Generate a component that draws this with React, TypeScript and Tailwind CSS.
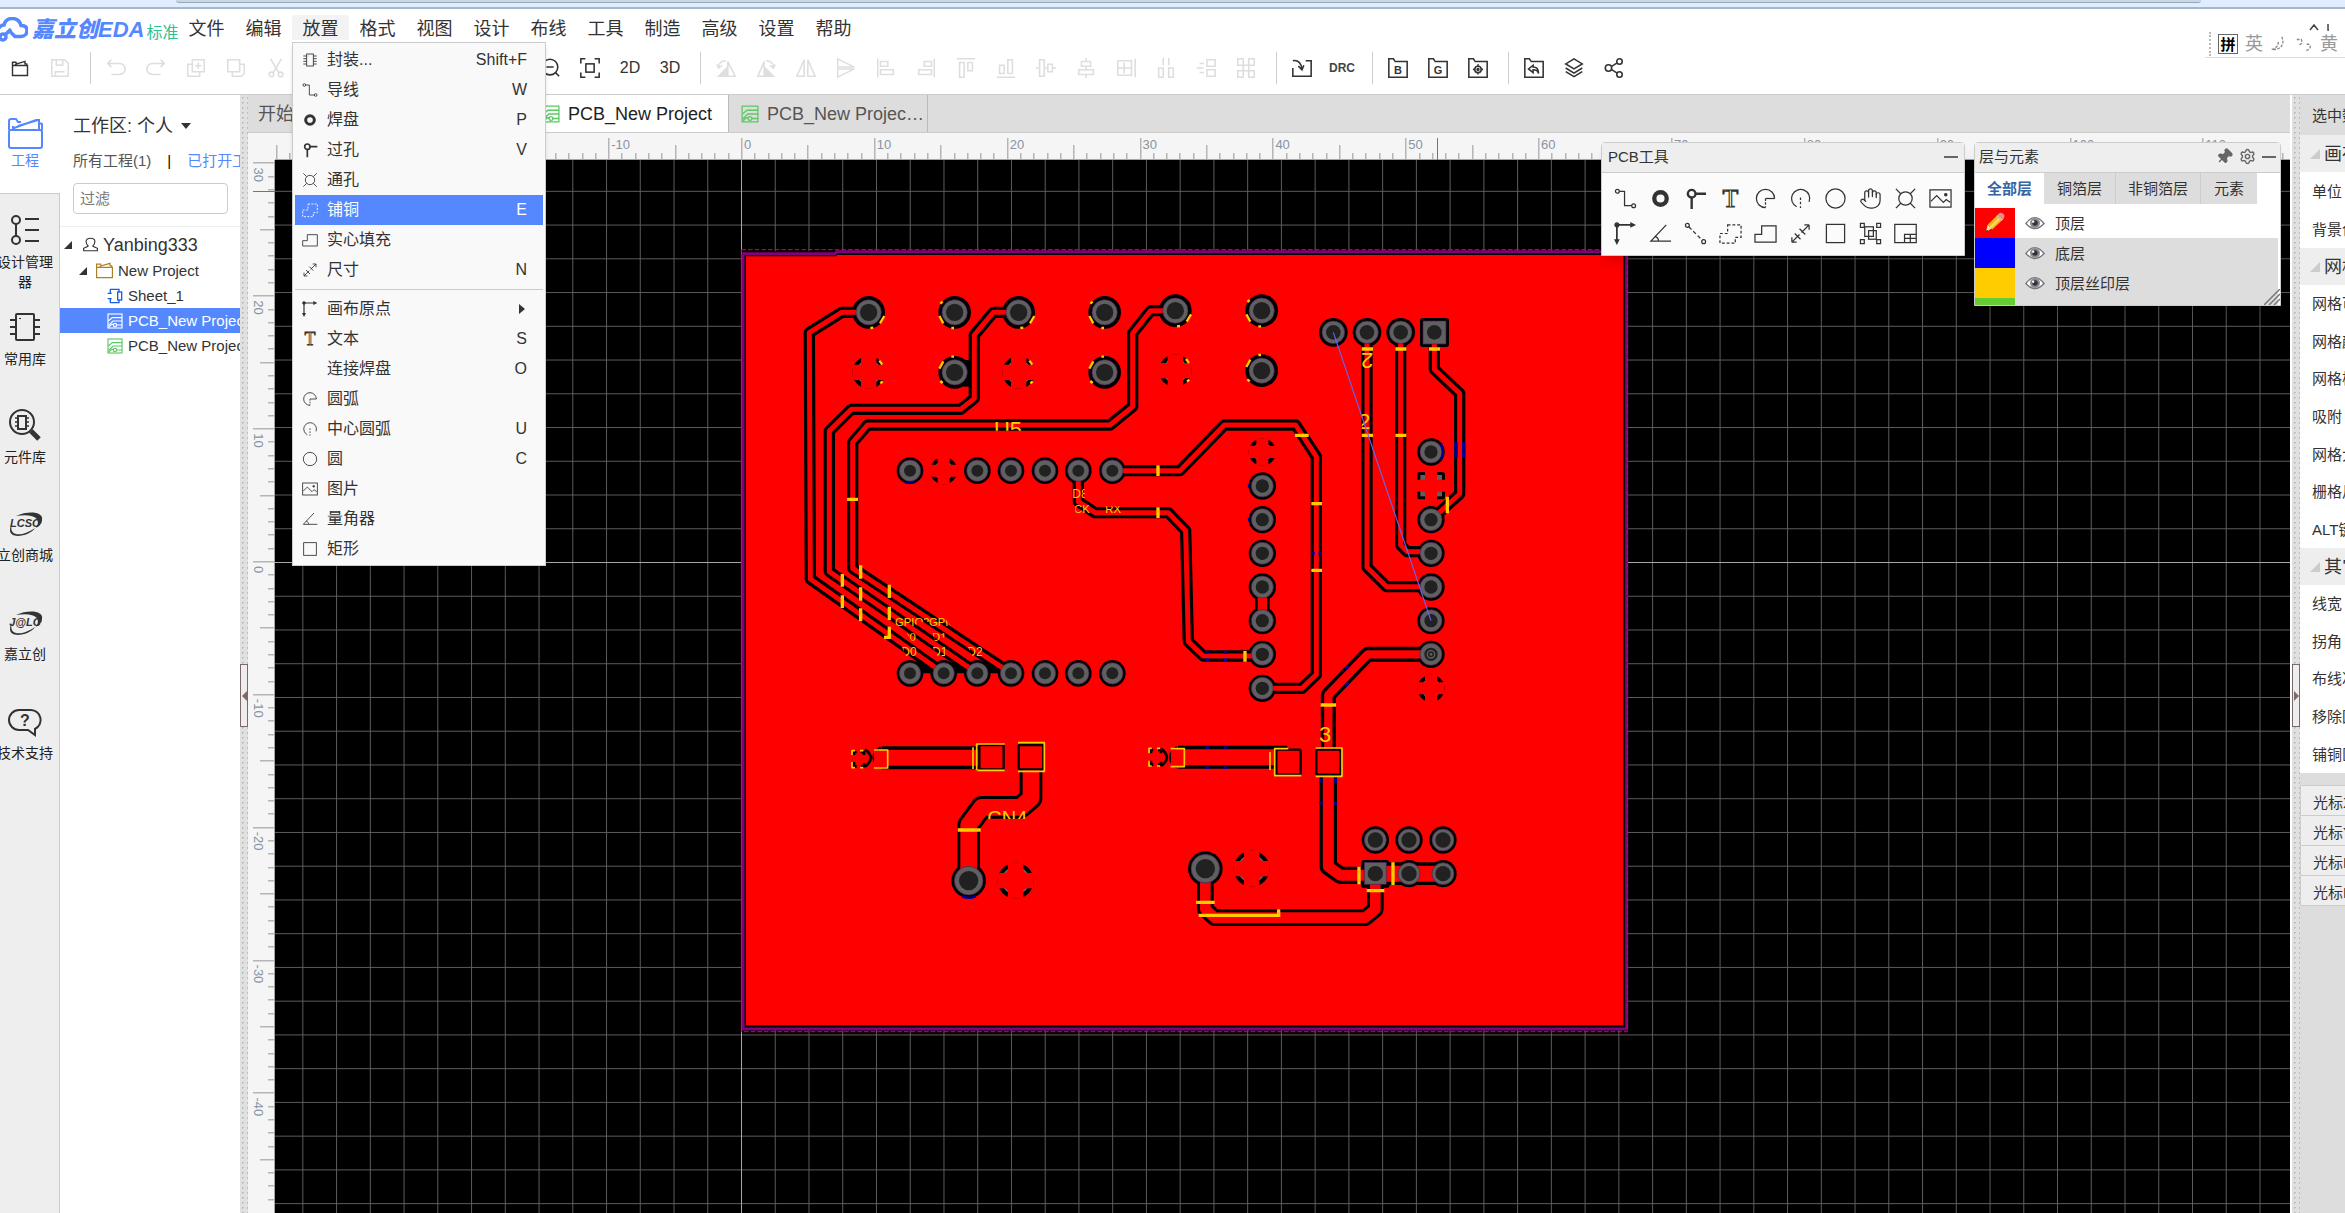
import { useState } from 'react';
import type { ReactNode } from 'react';
import { Hand, Settings, Pin } from 'lucide-react';

const ICONS: Record<string, ReactNode> = {
  footprint: (
    <>
      <rect x="7" y="3" width="10" height="18" />
      <path d="M2 6h5M2 10h5M2 14h5M2 18h5M17 6h5M17 10h5M17 14h5M17 18h5" />
      <path d="M10 6h.5" />
    </>
  ),
  track: (
    <>
      <circle cx="3.500" cy="4.500" r="2" />
      <circle cx="20.500" cy="19.500" r="2" />
      <path d="M5.500 4.500H11v15h7.500" />
    </>
  ),
  pad: <circle cx="12" cy="12" r="6.500" strokeWidth="4.500" />,
  via: (
    <>
      <circle cx="8" cy="7" r="4" strokeWidth="2.500" />
      <path d="M12 7h11M8 11v12" strokeWidth="2.500" />
    </>
  ),
  hole: (
    <>
      <circle cx="12" cy="12" r="7" />
      <path d="M2 2l5 5M22 2l-5 5M2 22l5-5M22 22l-5-5" />
    </>
  ),
  copper: <path d="M9 3h14v13h-6v6H1V12h8z" strokeDasharray="3 2" />,
  solid: <path d="M1 13h7V4h15v17H1z" />,
  dimension: (
    <>
      <path d="M13 11l8-8M21 3h-5M21 3v5M11 13l-8 8M3 21h5M3 21v-5" />
      <path d="M11 7l6 6M6 12l6 6" />
    </>
  ),
  origin: (
    <>
      <path d="M3 3h15M3 3v16" strokeWidth="1.800" />
      <path d="M17 0l6 3-6 3zM0 18l3 6 3-6z" fill="currentColor" stroke="none" />
      <circle cx="3" cy="3" r="2" fill="currentColor" />
    </>
  ),
  text: (
    <text x="12" y="21" textAnchor="middle" fontSize="27" fontFamily="Liberation Serif, serif" strokeWidth="1.200">
      T
    </text>
  ),
  arc: (
    <>
      <path d="M21.500 12A9.500 9.500 0 1 0 12 21.500" />
      <path d="M21.500 12H12" />
      <path d="M12 12v9.500" strokeDasharray="2.500 1.500" />
    </>
  ),
  centerArc: (
    <>
      <path d="M21 15.500A9.500 9.500 0 1 0 8 20.600" />
      <path d="M12 11v11" strokeDasharray="2.500 2" />
    </>
  ),
  circle: <circle cx="12" cy="12" r="10" />,
  image: (
    <>
      <rect x="1" y="3" width="22" height="18" />
      <path d="M2 15l6-6 7 7 3-3 4 3" />
      <circle cx="17.500" cy="8" r="1.200" fill="currentColor" />
    </>
  ),
  protractor: <path d="M18 3L2 20h21M6 15c3 1 4 3 4 5" />,
  rect: <rect x="2.500" y="2.500" width="19" height="19" />,
  link: (
    <>
      <circle cx="3.500" cy="3.500" r="2" />
      <circle cx="20.500" cy="20.500" r="2" />
      <path d="M5 5l14 14" strokeDasharray="4 2.500" />
    </>
  ),
  group: (
    <>
      <rect x="6" y="5" width="9" height="10" />
      <rect x="10" y="9" width="8" height="9" />
      <path d="M1.500 1.500h4v4h-4zM18.500 1.500h4v4h-4zM1.500 18.500h4v4h-4zM18.500 18.500h4v4h-4z" />
    </>
  ),
  table: (
    <>
      <rect x="0.800" y="2.500" width="22.400" height="19" />
      <path d="M11 21v-8h12M11 17h12M17 13v8" />
    </>
  ),
  open: <path d="M3 9v12h18V9zM3 9V5h4l1 2 10-3v3h2v2M6 9l1-2" />,
  save: <path d="M3 3h14l4 4v14H3zM8 3v6h7V3M7 21v-5h10" />,
  undo: <path d="M7 3L3 7l4 4M3 7h13a5 5 0 0 1 0 12H7" />,
  redo: <path d="M17 3l4 4-4 4M21 7H8a5 5 0 0 0 0 12h9" />,
  duplicate: <path d="M8 3h13v13H8zM8 8H3v13h13v-5M14.500 6v7M11 9.500h7" />,
  copy: <path d="M3 3h13v13H3zM16 8h5v10l-3 3H8v-5" />,
  cut: (
    <>
      <path d="M6 2l9 15M18 2L9 17" />
      <circle cx="7" cy="19" r="2.500" />
      <circle cx="17" cy="19" r="2.500" />
    </>
  ),
  zoomOut: (
    <>
      <circle cx="12" cy="11" r="8.500" />
      <path d="M8 11h8M18 17l4 4" />
    </>
  ),
  fit: (
    <>
      <path d="M2 7V2h5M17 2h5v5M22 17v5h-5M7 22H2v-5" />
      <rect x="7.500" y="7.500" width="9" height="9" />
    </>
  ),
  rotateLeft: (
    <>
      <path d="M14 5v16h8z" />
      <path d="M4 21h9v-9z" fill="currentColor" />
      <path d="M4 11c0-4 3-7 8-7M2 8l2 4 4-3" />
    </>
  ),
  rotateRight: (
    <>
      <path d="M10 5v16H3z" />
      <path d="M20 21h-9v-9z" fill="currentColor" />
      <path d="M20 11c0-4-3-7-8-7M22 8l-2 4-4-3" />
    </>
  ),
  flipH: <path d="M10 3v18H2zM14 3v18h8z" />,
  flipV: <path d="M3 2l18 9H3zM3 22l18-9H3z" />,
  alignLeft: <path d="M3 2v20M6 5h8v5H6zM6 14h14v5H6z" />,
  alignRight: <path d="M21 2v20M10 5h8v5h-8zM4 14h14v5H4z" />,
  alignTop: <path d="M2 2h20M5 6h5v16H5zM14 6h5v9h-5z" />,
  alignBottom: <path d="M2 22h20M5 9h5v9H5zM14 3h5v15h-5z" />,
  alignMiddle: <path d="M1 12h4M10 12h4M19 12h4M5 3h5v18H5zM14 8h5v8h-5z" />,
  alignCenter: <path d="M12 1v4M12 10v4M12 19v4M7 5h10v5H7zM4 14h16v5H4z" />,
  distGrid: <path d="M3 4h15v16H3zM3 12h15M10 6v12M22 2v20" />,
  distH: <path d="M4 12h5v10H4zM15 12h5v10h-5zM9 1v8M15 1v8" />,
  distV: <path d="M13 3h9v7h-9zM13 14h9v7h-9zM5 7h5M2 12h7M5 17h5" />,
  distArray: <path d="M3 2h6v7H3zM15 2h6v7h-6zM3 15h6v7H3zM15 15h6v7h-6zM9 9h6v6H9z" />,
  importIcon: <path d="M2 12v9h20V4h-6M2 4c6-1 9 3 10 9M8 10l4 4 2-5" />,
  share: (
    <>
      <circle cx="6" cy="12" r="3.500" />
      <circle cx="18" cy="5" r="3" />
      <circle cx="18" cy="19" r="3" />
      <path d="M9 10.500L15.500 6.500M9 13.500l6.500 4" />
    </>
  ),
  layers: <path d="M12 2l9 5.500-9 5.500-9-5.500zM3 12l9 5.500L21 12M3 16l9 5.500L21 16" />,
  folderBack: (
    <>
      <path d="M2 22V2h5l2 3h13v17z" />
      <path d="M11 9l-5 4 5 4v-3c4 0 5 1 6 4 0-4-1-7-6-7z" />
    </>
  ),
  folderGear: (
    <>
      <path d="M2 22V2h5l2 3h13v17z" />
      <circle cx="12" cy="13.500" r="3.500" />
      <circle cx="12" cy="13.500" r="1" />
      <path d="M12 8v2M12 17v2M6.500 13.500h2M15.500 13.500h2" />
    </>
  ),
  folderB: (
    <>
      <path d="M2 22V2h5l2 3h13v17z" />
      <text x="12" y="18" textAnchor="middle" fontSize="12" fontWeight="bold" fill="currentColor" stroke="none">B</text>
    </>
  ),
  folderG: (
    <>
      <path d="M2 22V2h5l2 3h13v17z" />
      <text x="12" y="18" textAnchor="middle" fontSize="12" fontWeight="bold" fill="currentColor" stroke="none">G</text>
    </>
  ),
  pcb: (
    <>
      <rect x="1.500" y="1.500" width="21" height="21" />
      <path d="M2 12l6-5h15M2 19l7-7h14M2 22l5-5h3M14 18h9" />
      <circle cx="12" cy="18" r="2.500" />
    </>
  ),
  sheet: (
    <>
      <path d="M5 7V2h13v4M5 17v5h13v-4M1 8h6M1 16h6" />
      <rect x="16" y="6" width="6" height="12" />
    </>
  ),
  folder: <path d="M2 8v13h20V8zM2 8V4h5l1 2 11-3v3h2v2M6 8l1-2" />,
  user: <path d="M8 14c-2-2-3-4-3-7 0-3 2-5 7-5s7 2 7 5c0 3-1 5-3 7v1l7 3v4H1v-4l7-3z" />,
};

type IconProps = { name: string; className?: string; stroke?: number };

const Icon = ({ name, className = 'size-6', stroke = 1.5 }: IconProps) => (
  <svg viewBox="0 0 24 24" className={`shrink-0 ${className}`} fill="none" stroke="currentColor" strokeWidth={stroke} aria-hidden="true">
    {ICONS[name]}
  </svg>
);

const MENUS = ['文件', '编辑', '放置', '格式', '视图', '设计', '布线', '工具', '制造', '高级', '设置', '帮助'];

const PLACE_TOP = [
  ['footprint', '封装...', 'Shift+F'],
  ['track', '导线', 'W'],
  ['pad', '焊盘', 'P'],
  ['via', '过孔', 'V'],
  ['hole', '通孔', ''],
  ['copper', '铺铜', 'E'],
  ['solid', '实心填充', ''],
  ['dimension', '尺寸', 'N'],
];

const PLACE_BOTTOM = [
  ['origin', '画布原点', '>'],
  ['text', '文本', 'S'],
  ['', '连接焊盘', 'O'],
  ['arc', '圆弧', ''],
  ['centerArc', '中心圆弧', 'U'],
  ['circle', '圆', 'C'],
  ['image', '图片', ''],
  ['protractor', '量角器', ''],
  ['rect', '矩形', ''],
];

const MenuRow = ({ item }: { item: string[] }) => {
  const [icon, label, key] = item;
  const active = label === '铺铜';
  return (
    <li>
      <button className={`flex h-[30px] w-full items-center pr-4 pl-[7px] text-base leading-none ${active ? 'bg-[#5588ff] text-white' : 'text-[#333]'}`}>
        <span className="w-[25px]">{icon && <Icon name={icon} className="size-4" stroke={1.3} />}</span>
        <span className="flex-1 text-left">{label}</span>
        {key === '>' ? (
          <svg viewBox="0 0 6 10" className="mr-0.5 h-2.5 w-1.5" fill="currentColor"><path d="M0 0l6 5-6 5z" /></svg>
        ) : (
          <span>{key}</span>
        )}
      </button>
    </li>
  );
};

const PlaceMenu = () => (
  <div className="absolute top-full left-0 z-30 w-[254px] border border-[#ccc] bg-[#f9f9f9] p-0.5 pb-px shadow-md">
    <ul>
      {PLACE_TOP.map((item) => <MenuRow key={item[1]} item={item} />)}
    </ul>
    <hr className="my-1 border-[#ccc]" />
    <ul>
      {PLACE_BOTTOM.map((item) => <MenuRow key={item[1]} item={item} />)}
    </ul>
  </div>
);

const MenuBar = () => (
  <div className="flex h-[33px] shrink-0 items-end bg-white">
    <div className="flex h-[25px] w-[178px] items-center whitespace-nowrap">
      <svg viewBox="0 0 28 25" className="h-[25px] w-7 shrink-0" fill="none" stroke="#5588ff" strokeWidth="3.500">
        <path d="M-1 11C1 8 3 8 4 8 5 4 8 1.500 12 1.500c5 0 8 3 9 7 4 0 6 2 6 5s-2 6-6 6h-6l-5-5" />
        <circle cx="3" cy="20" r="3" />
        <path d="M5 18l6-6" />
      </svg>
      <span className="ml-1 text-[22px] leading-7 font-black text-[#5588ff] italic">嘉立创EDA</span>
      <span className="ml-0.5 pt-1.5 text-base leading-none text-[#2fc090]">标准</span>
    </div>
    <nav className="flex">
      {MENUS.map((m) => (
        <div key={m} className="relative">
          <button className={`h-[25px] w-[57px] rounded-t text-lg leading-[29px] text-[#333] ${m === '放置' ? 'bg-[#f3f3f3]' : ''}`}>{m}</button>
          {m === '放置' && <PlaceMenu />}
        </div>
      ))}
    </nav>
    <div className="relative ml-auto h-full w-[140px]">
      {/* floating input-method bar */}
      <div className="absolute top-[22px] right-0 z-10 flex h-[27px] w-[140px] items-center gap-[7px] border-b border-[#ddd] pl-1 text-lg leading-none text-[#999]">
        <span className="h-6 border-l-2 border-dotted border-[#bbb]" />
        <span className="flex size-5 items-center justify-center border border-[#666] text-[15px] font-bold text-black">拼</span>
        <span>英</span>
        <svg viewBox="0 0 20 20" className="size-[18px]" fill="none" stroke="#888" strokeWidth="1.500" strokeDasharray="3 1.500"><path d="M13 2c4 8-1 15-11 14 5-1 8-5 7-9" /></svg>
        <svg viewBox="0 0 20 20" className="size-[18px]" fill="none" stroke="#888" strokeWidth="1.500" strokeDasharray="3 1.500"><path d="M2 5h5c2 4-1 6-3 6M13 10c6 0 5 7-1 7" /></svg>
        <span>黄</span>
      </div>
      <svg viewBox="0 0 24 8" className="absolute top-3.5 right-3 h-2 w-6" fill="none" stroke="#444" strokeWidth="1.500"><path d="M1 7l4-5 4 5M19 1v6h1" /></svg>
    </div>
  </div>
);

const TOOLBAR: string[][] = [
  ['open', 'save'],
  ['undo', 'redo', 'duplicate', 'copy', 'cut', 'gap', 'zoomOut', 'fit', '2D', '3D'],
  ['rotateLeft', 'rotateRight', 'flipH', 'flipV', 'alignLeft', 'alignRight', 'alignTop', 'alignBottom', 'alignMiddle', 'alignCenter', 'distGrid', 'distH', 'distV', 'distArray'],
  ['importIcon', 'DRC'],
  ['folderB', 'folderG', 'folderGear'],
  ['folderBack', 'layers', 'share'],
];
const ENABLED = ['open', 'zoomOut', 'fit', '2D', '3D', 'importIcon', 'DRC', 'folderB', 'folderG', 'folderGear', 'folderBack', 'layers', 'share'];

const ToolButton = ({ name }: { name: string }) => {
  if (name === 'gap') return <div className="w-[234px]" />;
  const color = ENABLED.includes(name) ? 'text-[#333]' : 'text-[#dedede]';
  return (
    <button aria-label={name} className={`flex h-8 w-10 items-center justify-center ${color}`}>
      {name === '2D' || name === '3D' ? (
        <span className="text-base">{name}</span>
      ) : name === 'DRC' ? (
        <span className="text-xs font-bold text-[#444]">DRC</span>
      ) : (
        <Icon name={name} className={name === 'open' ? 'size-5' : 'size-[22px]'} stroke={1.7} />
      )}
    </button>
  );
};

const Toolbar = () => (
  <div className="flex h-[53px] shrink-0 items-center border-b border-[#ccc] bg-white">
    {TOOLBAR.map((group, i) => (
      <div key={i} className="flex items-center">
        {i > 0 && <span className="mr-[5px] ml-2.5 h-8 w-px bg-[#ccc]" />}
        {group.map((name) => <ToolButton key={name} name={name} />)}
      </div>
    ))}
  </div>
);

const Ellipses = () => (
  <>
    <path d="M9 5C22-1 37 1 35 9c0 4-3 6-6 8C35 8 27 2 9 5z" fill="#333" stroke="none" />
    <path d="M5 13c-4 13 10 13 23 4C23 25 3 29 3 19c0-3 1-4 2-6z" fill="#333" stroke="none" />
  </>
);

const RAIL = [
  {
    label: '设计管理器',
    box: 'pt-5 h-[112px]',
    art: (
      <>
        <circle cx="11" cy="6" r="4" />
        <circle cx="11" cy="26" r="4" />
        <path d="M11 10v12M20 5h14M20 16h14M20 27h14" />
      </>
    ),
  },
  {
    label: '常用库',
    box: 'pt-[5px] h-[98px]',
    art: (
      <>
        <rect x="11" y="3" width="18" height="26" rx="1" />
        <path d="M5 9h6M5 16h6M5 23h6M29 9h6M29 16h6M29 23h6M15 7v1" />
      </>
    ),
  },
  {
    label: '元件库',
    box: 'pt-[5px] h-[98px]',
    art: (
      <>
        <circle cx="17" cy="13" r="12" />
        <rect x="13" y="7" width="8" height="13" />
        <path d="M10 9h3M10 13h3M10 17h3M21 9h3M21 13h3M21 17h3" strokeWidth="1.500" />
        <path d="M26 22l8 8" strokeWidth="5" />
      </>
    ),
  },
  {
    label: '立创商城',
    box: 'pt-[5px] h-[99px]',
    art: (
      <g transform="translate(2 4)">
        <Ellipses />
        <text x="18" y="16" textAnchor="middle" fontSize="11" fontWeight="bold" fontStyle="italic" fill="#333" stroke="none">LCSC</text>
      </g>
    ),
  },
  {
    label: '嘉立创',
    box: 'pt-[5px] h-[99px]',
    art: (
      <g transform="translate(2 4)">
        <Ellipses />
        <text x="18" y="16" textAnchor="middle" fontSize="11" fontWeight="bold" fontStyle="italic" fill="#333" stroke="none">J@LC</text>
      </g>
    ),
  },
  {
    label: '技术支持',
    box: 'pt-[5px] h-[99px]',
    art: (
      <>
        <path d="M14 5h12a10 10 0 0 1 4 19v6l-7-5h-9a10 10 0 0 1 0-20z" />
        <text x="20" y="21" textAnchor="middle" fontSize="16" fontWeight="bold" fill="#333" stroke="none">?</text>
      </>
    ),
  },
];

const Rail = () => (
  <div className="flex w-[60px] shrink-0 flex-col text-sm leading-5">
    <button className="flex h-[98px] flex-col items-center pt-[21px] pr-2.5 text-[#5588ff]">
      <svg viewBox="0 0 40 34" className="h-[34px] w-10" fill="none" stroke="#5588ff" strokeWidth="2">
        <rect x="4" y="14" width="33" height="18" rx="2" />
        <path d="M4 14V5q0-2 2-2h5l2 3h3M37 14V8l-3-1M9 12l22-8h3v9M8 10v3M13 10l20-6" />
      </svg>
      工程
    </button>
    <div className="flex-1 overflow-hidden border-t border-r border-[#ccc] bg-[#eee]">
      {RAIL.map((r) => (
        <button key={r.label} className={`-ml-[3px] flex w-14 flex-col items-center text-[#222] ${r.box}`}>
          <svg viewBox="0 0 40 32" className="h-8 w-10 shrink-0" fill="none" stroke="#333" strokeWidth="2">{r.art}</svg>
          <span className="mt-1.5 w-14 text-center">{r.label}</span>
        </button>
      ))}
    </div>
  </div>
);

const Arrow = () => (
  <svg viewBox="0 0 8 8" className="size-2 shrink-0" fill="#333"><path d="M8 0v8H0z" /></svg>
);

const ProjectPanel = () => {
  const [filter, setFilter] = useState('');
  return (
    <div className="w-[180px] shrink-0 overflow-hidden bg-white whitespace-nowrap text-[#333]">
      <button className="mt-[18px] ml-[13px] flex h-[26px] items-center gap-2 text-lg leading-none">
        工作区: 个人
        <svg viewBox="0 0 10 6" className="h-1.5 w-2.5" fill="#333"><path d="M0 0h10L5 6z" /></svg>
      </button>
      <div className="mt-2.5 ml-[13px] flex h-[22px] items-center text-[15px] leading-none text-[#555]">
        <a href="#all">所有工程(1)</a>
        <span className="mx-4 text-black">|</span>
        <a href="#opened" className="text-[#5588ff]">已打开工程</a>
      </div>
      <input
        aria-label="过滤"
        placeholder="过滤"
        value={filter}
        onChange={(e) => setFilter(e.target.value)}
        className="mt-3 ml-[13px] block h-[31px] w-[155px] rounded border border-[#ccc] px-1.5 text-[15px] placeholder:text-[#777]"
      />
      <div className="mt-3 border-t border-[#eee] text-[15px] leading-none">
        <div className="flex h-[31px] items-center pt-1 pl-1">
          <Arrow />
          <Icon name="user" className="mr-[5px] ml-[11px] size-[15px]" stroke={1.8} />
          <span className="text-lg leading-none">Yanbing333</span>
        </div>
        <div className="flex h-[25px] items-center pl-[19px]">
          <Arrow />
          <Icon name="folder" className="mr-1 ml-2 size-[19px] text-[#b08020]" />
          New Project
        </div>
        <div className="flex h-[25px] items-center gap-[5px] pl-[47px]">
          <Icon name="sheet" className="size-4 text-[#1560e0]" stroke={2} />
          Sheet_1
        </div>
        <div className="flex h-[25px] items-center gap-[5px] bg-[#5588ff] pl-[47px] text-white">
          <Icon name="pcb" className="size-4" stroke={1.7} />
          PCB_New Project
        </div>
        <div className="flex h-[25px] items-center gap-[5px] pl-[47px]">
          <Icon name="pcb" className="size-4 text-[#5ec865]" stroke={1.7} />
          PCB_New Project
        </div>
      </div>
    </div>
  );
};

const Splitter = ({ dir }: { dir: 'left' | 'right' }) => (
  <div className="relative w-2 shrink-0 bg-[#e0e0e0] bg-[radial-gradient(#bdbdbd_1px,transparent_1px)] bg-[size:5px_5px]">
    <button aria-label="toggle panel" className="absolute top-[569px] left-0 flex h-[63px] w-2 items-center justify-center border border-[#7a6a6a] bg-[#eee]">
      <svg viewBox="0 0 5 10" className="h-2.5 w-[5px]" fill="#7a6a6a"><path d={dir === 'left' ? 'M5 0v10L0 5z' : 'M0 0v10l5-5z'} /></svg>
    </button>
  </div>
);

const Tabs = () => (
  <div className="flex h-[38px] shrink-0 border-b border-[#ccc] bg-[#ddd] text-lg leading-none whitespace-nowrap text-[#555]">
    <button className="w-[83px] border-r border-[#bbb] pl-2.5 text-left">开始</button>
    <button className="flex w-[199px] items-center gap-2 border-r border-[#bbb] pl-3">
      <Icon name="sheet" className="size-[18px] text-[#1560e0]" stroke={2} />
      Sheet_1
    </button>
    <button className="flex w-[199px] items-center gap-2 border-r border-[#bbb] bg-white pl-3 text-[#222]">
      <Icon name="pcb" className="size-[18px] text-[#5ec865]" stroke={1.7} />
      PCB_New Project
    </button>
    <button className="flex w-[199px] items-center gap-2 border-r border-[#bbb] pl-3">
      <Icon name="pcb" className="size-[18px] text-[#5ec865]" stroke={1.7} />
      PCB_New Projec…
    </button>
  </div>
);

// 10 mm on the rulers, in px
const TEN = 132.85;
const range = (a: number, b: number) => Array.from({ length: b - a + 1 }, (_, i) => a + i);
const tickLength = (n: number) => (n % 10 === 0 ? 21 : n % 5 === 0 ? 14 : 6);

const TopRuler = () => (
  <svg className="h-[27px] w-full shrink-0 bg-[#f5f5f5]" fontSize="13" fill="#8793a3">
    {range(-35, 116).map((n) => {
      const x = Math.round(494 + (n * TEN) / 10);
      return <rect key={n} x={x - 1} y={26 - tickLength(n)} width="1.500" height={tickLength(n)} fill="#b5b5b5" />;
    })}
    {range(-3, 11).map((n) => <text key={n} x={496 + n * TEN} y="16">{n * 10}</text>)}
    <rect x="27" y="26" width="100%" height="1" fill="#a5a5a5" />
    <rect x="1189" y="5" width="1" height="22" fill="#2f86d8" />
  </svg>
);

const LeftRuler = () => (
  <svg className="h-full w-[27px] shrink-0 bg-[#f5f5f5]" fontSize="13" fill="#8793a3">
    {range(-48, 30).map((n) => {
      const y = Math.round(402 - (n * TEN) / 10);
      return <rect key={n} x={26 - tickLength(n)} y={y - 1} width={tickLength(n)} height="1.500" fill="#b5b5b5" />;
    })}
    {range(-4, 3).map((n) => (
      <text key={n} transform={`translate(6 ${406 - n * TEN}) rotate(90)`}>{n * 10}</text>
    ))}
    <rect x="26" y="0" width="1" height="100%" fill="#a5a5a5" />
    <rect x="5" y="31" width="22" height="1" fill="#2f86d8" />
  </svg>
);

// [path, clearance width, copper width], one third of a px per unit
const TRACKS: [string, number, number][] = [
  ['M416 217H335L238 278 241 1017 641 1300', 34, 15],
  ['M866 217H790L733 285V475L692 508H364L298 573V995L742 1300', 34, 15],
  ['M1336 212H1262L1208 280V500L1140 555H413L368 607V985L843 1300', 34, 15],
  ['M1147 692H1350L1483 555H1697L1759 650V1304L1716 1345H1597', 34, 15],
  ['M1045 692V785L1095 818H1315L1367 872 1375 1205 1420 1248H1597', 34, 15],
  ['M1911 277V982L1970 1040H2103', 34, 15],
  ['M2012 277V915L2032 935H2103', 34, 15],
  ['M2113 277V388L2189 460V762L2103 840', 34, 15],
  ['M2103 1243H1913L1795 1365V1560', 45, 25],
  ['M1795 1560V1880L1831 1906H1936', 52, 33],
  ['M1936 1901V2008L1906 2033H1454L1426 2008V1886', 50, 32],
  ['M1936 1901H2139', 68, 48],
  ['M903 1552V1675L871 1702H755L716 1755V1922', 68, 50],
  ['M455 1553H783', 69, 48],
  ['M1344 1552H1672', 69, 48],
  ['M1597 1041V1142', 44, 28],
];

type Pad = [number, number, number, number, number];
const row = (xs: number[], y: number, r: number, g: number, h: number): Pad[] => xs.map((x) => [x, y, r, g, h]);
const col = (x: number, ys: number[], r: number, g: number, h: number): Pad[] => ys.map((y) => [x, y, r, g, h]);

// x, y, clearance radius, copper radius, hole radius
const PADS: Pad[] = [
  ...row([416, 674, 866, 1124], 217, 49, 38, 26),
  ...row([1336, 1595], 212, 49, 38, 26),
  ...row([674, 1124], 397, 49, 38, 26),
  [1595, 392, 49, 38, 26],
  ...row([540, 742, 843, 945, 1045, 1147], 692, 40, 32, 18),
  ...row([540, 641, 742, 843, 945, 1045, 1147], 1300, 40, 32, 18),
  ...col(1597, [738, 839, 940, 1041, 1142, 1243, 1345], 41, 33, 20),
  ...col(2103, [636, 839, 940, 1041, 1142, 1243], 41, 33, 20),
  ...row([1810, 1911, 2012], 277, 43, 34, 22),
  ...row([1936, 2037, 2139], 1800, 41, 33, 23),
  ...row([2037, 2139], 1901, 41, 33, 23),
  [716, 1922, 52, 43, 29],
  [1426, 1886, 52, 43, 29],
];

const THERMALS: [number, number, number, number][] = [
  [416, 397, 49, 23],
  [866, 397, 49, 23],
  [1336, 392, 49, 23],
  [641, 692, 41, 18],
  [1597, 636, 41, 18],
  [2103, 1345, 41, 18],
  [857, 1922, 54, 23],
  [1565, 1886, 54, 23],
];

const SILK =
  'M351 778H384M1284 676V708M1284 802V834M337 1002V1040M337 1066V1104M392 976V1016M392 1042V1082M392 1105V1144' +
  'M478 1034V1074M478 1100V1140M478 1160V1192H462M1895 327H1929M1996 327H2029M2097 327H2130M1895 586H1929M1996 586H2029' +
  'M1695 586H1736M1744 791H1776M1744 991H1776M1772 1395H1818M1545 1233V1265M2152 770V820' +
  'M683 1770H752M1398 1987H1454M1406 2026H1646V2008M1910 1952H1963M1887 1880V1933M1989 1867V1935';

const SILK_THIN =
  'M729 1522V1587M1620 1536V1590M743 1591H824M740 1591V1512H824M864 1508H943V1594H864' +
  'M1675 1526H1634V1607H1714M1757 1524H1836V1609H1757M432 1530H473V1584H432M1322 1526H1363V1580H1322' +
  'M375 1532H366V1545M366 1566V1583H375M390 1532H400M390 1583H400M1265 1525H1257V1540M1257 1562V1578H1265M1281 1525H1290M1281 1578H1290';

const PAD_MARKS =
  'M463 228L450 250M421 264L430 263M913 228L900 250M871 264L880 263M1383 223L1370 245M1341 259L1350 258' +
  'M628 228L640 250M664 264H672M631 191L638 185M1078 228L1090 250M1114 264H1122M1081 191L1088 185M1549 223L1561 245M1585 259H1593M1552 186L1559 180' +
  'M628 386L640 364M664 350H672M631 423L638 429M1078 386L1090 364M1114 350H1122M1081 423L1088 429M1549 381L1561 359M1585 345H1593M1552 418L1559 424' +
  'M448 362L457 374M451 430L458 424M898 362L907 374M901 430L908 424M1368 357L1377 369M1371 425L1378 419';

const Board = () => (
  <g transform="translate(455 80) scale(0.333333)" strokeLinejoin="round">
    <path d="M35 34H2694V2369H35Z" fill="#000" />
    <rect x="48" y="45" width="2632" height="2311" fill="#f00" />
    <path d="M48 46H320" stroke="#000" strokeWidth="6" />
    <path d="M39 41H315L320 35H2690V2367H39Z" fill="none" stroke="#800080" strokeWidth="9" />
    <path d="M34 29H2692V2375H34Z" fill="none" stroke="#f00010" strokeWidth="3" strokeDasharray="14 6" />

    <g fill="none" stroke="#000">
      {TRACKS.map(([d, w]) => <path key={d} d={d} strokeWidth={w} />)}
    </g>
    <path d="M560 1262L600 1275H640L690 1262 740 1275 790 1262 830 1280 843 1300H560Z" fill="#000" />
    <path d="M700 360H722V440H700Z" fill="#000" />
    {PADS.map(([x, y, r]) => <circle key={`${x}-${y}`} cx={x} cy={y} r={r} fill="#000" />)}
    <rect x="2070" y="234" width="87" height="87" rx="8" fill="#000" />
    <rect x="1893" y="1860" width="86" height="84" rx="10" fill="#000" />
    <path d="M405 1528Q440 1553 405 1580M452 1522Q410 1553 452 1584" stroke="#000" strokeWidth="8" fill="none" />
    <path d="M1293 1526Q1328 1553 1293 1578M1341 1521Q1300 1553 1341 1583" stroke="#000" strokeWidth="8" fill="none" />
    <g fill="none" stroke="#f00">
      {TRACKS.map(([d, , w]) => <path key={d} d={d} strokeWidth={w} />)}
    </g>

    <g stroke="#000" strokeWidth="7" fill="#f00">
      <rect x="748" y="1515" width="73" height="73" rx="4" />
      <rect x="866" y="1515" width="74" height="73" rx="4" />
      <rect x="1639" y="1529" width="73" height="75" rx="4" />
      <rect x="1759" y="1529" width="73" height="75" rx="4" />
    </g>
    <g fill="#f00">
      <rect x="432" y="1532" width="40" height="50" />
      <rect x="1323" y="1529" width="38" height="50" />
    </g>
    <g fill="none" stroke="#000" strokeWidth="8">
      <path d="M380 1536H372V1545M372 1566V1579H380M392 1536H402V1545M392 1579H402V1570" />
      <path d="M1270 1530H1263V1540M1263 1562V1574H1270M1284 1530H1293V1540M1284 1574H1293V1565" />
    </g>

    {THERMALS.map(([x, y, r, c]) => (
      <g key={`${x}-${y}`}>
        <circle cx={x} cy={y} r={r} fill="#000" />
        <circle cx={x} cy={y} r={r - 12} fill="#666" />
        <circle cx={x} cy={y} r={r - 16} fill="#f00" />
        <path d={`M${x - r} ${y}h${2 * r}M${x} ${y - r}v${2 * r}`} stroke="#f00" strokeWidth={2 * c} />
      </g>
    ))}
    <rect x="2062" y="696" width="83" height="82" rx="8" fill="#000" />
    <rect x="2071" y="705" width="65" height="64" fill="#606060" />
    <path d="M2060 737H2147M2103 694V780" stroke="#f00" strokeWidth="36" />

    {PADS.map(([x, y, , g, h]) => (
      <g key={`${x}-${y}`}>
        <circle cx={x} cy={y} r={g} fill="#606060" stroke="#4b1a55" strokeWidth="2" />
        <circle cx={x} cy={y} r={h} fill="#212121" />
      </g>
    ))}
    <g stroke="#4b1a55" strokeWidth="2">
      <rect x="2079" y="243" width="69" height="69" fill="#606060" />
      <rect x="1903" y="1867" width="66" height="66" fill="#606060" />
    </g>
    <circle cx="2113" cy="277" r="22" fill="#212121" />
    <circle cx="1936" cy="1901" r="23" fill="#212121" />
    <circle cx="2103" cy="1243" r="11" fill="none" stroke="#606060" strokeWidth="4" />
    <circle cx="2103" cy="1243" r="4" fill="#606060" />

    <g fill="none" stroke="#000090">
      <path d="M2178 606V653M2201 606V653" strokeWidth="10" />
      <path d="M1744 940H1754M1766 940H1776" strokeWidth="10" />
      <path d="M2132 610Q2146 636 2132 660" strokeWidth="7" />
      <path d="M1425 1237H1437M1481 1237H1491M1425 1259H1437M1481 1259H1491" strokeWidth="9" />
      <path d="M1773 1615V1628M1817 1615V1628M1773 1684V1694M1817 1684V1694" strokeWidth="9" />
      <path d="M526 728H553M696 1969Q716 1978 738 1969M1557 733V743M1557 834V844" strokeWidth="7" />
      <path d="M1846 1288L1856 1278M1846 1338L1856 1328" strokeWidth="9" />
      <path d="M1425 1523H1437M1481 1523H1491M1425 1583H1437M1481 1583H1491" strokeWidth="8" />
    </g>

    <g fill="none" stroke="#fc0">
      <path d={SILK} strokeWidth="10" strokeLinejoin="miter" />
      <path d={SILK_THIN} strokeWidth="5" />
      <path d={PAD_MARKS} strokeWidth="7" />
    </g>

    {/* silkscreen text only shows through the clearance around copper */}
    <clipPath id="silkClip">
      <path d="M790 540H890V572H790ZM1028 742H1064V778H1028ZM1036 795H1086V822H1036ZM1126 799H1176V822H1126ZM1895 320H1931V400H1895ZM1895 510H1920V570H1895ZM1770 1450H1820V1520H1770ZM770 1700H894V1738H770Z" />
      <path d="M490 1128H545L600 1130V1146H572L545 1162H490ZM597 1128H640L665 1160H597ZM530 1180H562V1202H545ZM608 1180H645V1190L615 1206ZM514 1218H560V1252H530ZM606 1218H645V1252H625ZM712 1218H758V1252H730Z" />
    </clipPath>
    <g clipPath="url(#silkClip)" fill="#fc0">
      <text x="792" y="592" fontSize="66">U5</text>
      <text x="1027" y="774" fontSize="36">D8</text>
      <text x="1032" y="819" fontSize="34">CK</text>
      <text x="1126" y="819" fontSize="34">RX</text>
      <text x="495" y="1158" fontSize="34">GPIO2</text>
      <text x="597" y="1158" fontSize="34">GPIO</text>
      <text x="514" y="1204" fontSize="34">D0</text>
      <text x="606" y="1204" fontSize="34">D1</text>
      <text x="514" y="1249" fontSize="36">D0</text>
      <text x="606" y="1249" fontSize="36">D1</text>
      <text x="712" y="1249" fontSize="36">D2</text>
      <text transform="translate(1930 338) rotate(180)" fontSize="66">2</text>
      <text x="1885" y="566" fontSize="66">2</text>
      <text x="1767" y="1506" fontSize="66">3</text>
      <text x="772" y="1755" fontSize="60">CN4</text>
    </g>
    <path d="M1810 277L2103 1142" stroke="#6464f0" strokeWidth="3.500" />
  </g>
);

const Canvas = () => (
  <svg className="h-full min-w-0 flex-1 bg-black">
    <defs>
      {/* 2.54 mm grid, anchored on the canvas origin */}
      <pattern id="grid" x="466" y="402" width="33.744" height="33.744" patternUnits="userSpaceOnUse">
        <path d="M.5 0V34M0 .5H34" stroke="#5c5c5c" fill="none" />
      </pattern>
    </defs>
    <rect width="100%" height="100%" fill="url(#grid)" />
    <rect x="466" y="0" width="1" height="100%" fill="#a8a8a8" />
    <rect x="0" y="402" width="100%" height="1" fill="#a8a8a8" />
    <Board />
  </svg>
);

const PALETTE = [
  ['track', 'pad', 'via', 'text', 'arc', 'centerArc', 'circle', 'hand', 'hole', 'image'],
  ['origin', 'protractor', 'link', 'copper', 'solid', 'dimension', 'rect', 'group', 'table'],
];

const ToolsPanel = () => (
  <section className="absolute top-[47px] right-[325px] z-10 w-[364px] rounded-t border border-[#ccc] bg-[#fbfbfb] text-[15px] text-[#333] shadow-lg">
    <header className="flex h-[30px] items-center justify-between border-b border-[#ccc] bg-[#eee] px-1.5 pb-0.5 leading-none">
      PCB工具
      <button aria-label="minimize" className="h-0.5 w-3.5 bg-[#666]" />
    </header>
    <div className="px-1.5 pt-2 pb-1">
      {PALETTE.map((tools) => (
        <div key={tools[0]} className="flex">
          {tools.map((t) => (
            <button key={t} aria-label={t} className="flex h-[35px] w-[35px] items-center justify-center">
              {t === 'hand' ? <Hand size={23} strokeWidth={1.3} /> : <Icon name={t} className="size-[23px]" stroke={1.3} />}
            </button>
          ))}
        </div>
      ))}
    </div>
  </section>
);

const LAYERS = [
  { name: '顶层', swatch: 'bg-[#ff0000]', bg: 'bg-white' },
  { name: '底层', swatch: 'bg-[#0000ff]', bg: 'bg-[#ddd]' },
  { name: '顶层丝印层', swatch: 'bg-[#ffcc00]', bg: 'bg-[#ddd]' },
];

const Pencil = () => (
  <svg viewBox="0 0 24 24" className="size-[22px]">
    <path d="M2 22l2-8 4 4z" fill="#fbe3b0" />
    <path d="M2 22l1-3 2 2z" fill="#333" />
    <path d="M4 14L15 3l6 5L9 19z" fill="#f5b21a" />
    <path d="M6 16L17 5l2 2L8 18z" fill="#ffd45a" />
    <path d="M15 3l2-2q3-1 5 2 1 2-1 5z" fill="#f28a8a" />
    <path d="M14 4l6 5" stroke="#bbb" strokeWidth="2" />
  </svg>
);

const Eye = () => (
  <svg viewBox="0 0 22 16" className="h-[15px] w-5">
    <path d="M1 8Q11-5 21 8 11 19 1 8z" fill="#fff" stroke="#777" strokeWidth="1.500" />
    <circle cx="11" cy="7.500" r="5.500" fill="#8a8a96" />
    <circle cx="11" cy="7.500" r="3" fill="#333" />
    <circle cx="9" cy="6" r="1.300" fill="#fff" />
  </svg>
);

const LayersPanel = () => (
  <section className="absolute top-[47px] right-[9px] z-10 w-[307px] rounded-t border border-[#ccc] bg-white text-[15px] leading-none text-[#333] shadow-lg">
    <header className="flex h-[30px] items-center gap-1.5 border-b border-[#ccc] bg-[#eee] px-1 pb-0.5 text-[#666]">
      <span className="flex-1 text-[#333]">层与元素</span>
      <button aria-label="pin"><Pin size={17} fill="currentColor" className="rotate-45" /></button>
      <button aria-label="settings"><Settings size={17} /></button>
      <button aria-label="minimize" className="h-0.5 w-3.5 bg-[#666]" />
    </header>
    <div className="flex h-[31px]">
      <button className="px-3 font-bold text-[#3465a4]">全部层</button>
      <button className="border-r border-[#ccc] bg-[#ddd] px-[13px]">铜箔层</button>
      <button className="border-r border-[#ccc] bg-[#ddd] px-3">非铜箔层</button>
      <button className="bg-[#ddd] px-[13px]">元素</button>
    </div>
    <ul className="mt-1">
      {LAYERS.map((l, i) => (
        <li key={l.name} className={`mr-0.5 flex h-[30px] items-center ${l.bg}`}>
          <span className={`flex h-full w-10 items-center justify-center ${l.swatch}`}>{i === 0 && <Pencil />}</span>
          <button aria-label="visible" className="mr-2.5 ml-2.5"><Eye /></button>
          {l.name}
        </li>
      ))}
      <li className="mr-0.5 flex h-[7px] bg-[#ddd]"><span className="w-10 bg-[#66cc33]" /></li>
    </ul>
    <svg viewBox="0 0 16 16" className="absolute right-0 bottom-0 size-4" stroke="#777" strokeWidth="1.500"><path d="M0 16L16 0M5 16L16 5M10 16l6-6" /></svg>
  </section>
);

const PROPS = [
  { title: '画布', rows: ['单位', '背景色'], height: 'h-[76px]' },
  { title: '网格', rows: ['网格可见', '网格颜色', '网格样式', '吸附', '网格大小', '栅格尺寸', 'ALT键栅格'], height: 'h-[263px]' },
  { title: '其它', rows: ['线宽', '拐角', '布线冲突', '移除回路', '铺铜区'], height: 'h-[188px]' },
];

const PropsPanel = () => (
  <aside className="w-[45px] shrink-0 overflow-hidden bg-[#ddd] text-[15px] leading-none whitespace-nowrap text-[#333]">
    <div className="flex h-10 items-center pl-3">选中数量</div>
    {PROPS.map((g) => (
      <div key={g.title}>
        <h3 className="flex h-[37px] items-center gap-1 bg-[#eee] pl-2.5 text-lg leading-none">
          <svg viewBox="0 0 10 10" className="size-2.5 shrink-0" fill="#ccc"><path d="M10 0v10H0z" /></svg>
          {g.title}
        </h3>
        <ul className={`grid auto-rows-fr bg-white pl-3 ${g.height}`}>
          {g.rows.map((r) => <li key={r} className="flex items-center">{r}</li>)}
        </ul>
      </div>
    ))}
    <ul className="mt-3 border-t border-l border-[#ccc]">
      {['光标X', '光标Y', '光标DX', '光标DY'].map((r) => (
        <li key={r} className="flex h-[30px] items-center border-b border-[#ccc] bg-[#eee] pt-1 pl-3">{r}</li>
      ))}
    </ul>
  </aside>
);

const App = () => (
  <div className="flex h-screen flex-col overflow-hidden bg-white font-['Liberation_Sans','Noto_Sans_CJK_SC',sans-serif]">
    <div className="flex h-[9px] shrink-0 justify-center border-b-2 border-[#a9b6ca] bg-[#e0ecff] pr-36 pl-44">
      <div className="h-[3px] flex-1 rounded-b-lg border-b border-[#98a6ba] bg-[#c8d6e6]" />
    </div>
    <MenuBar />
    <Toolbar />
    <div className="flex min-h-0 flex-1">
      <Rail />
      <ProjectPanel />
      <Splitter dir="left" />
      <main className="relative flex min-w-0 flex-1 flex-col">
        <Tabs />
        <TopRuler />
        <div className="flex min-h-0 flex-1">
          <LeftRuler />
          <Canvas />
        </div>
        <ToolsPanel />
        <LayersPanel />
      </main>
      <div className="w-0.5 shrink-0 bg-white" />
      <Splitter dir="right" />
      <PropsPanel />
    </div>
  </div>
);

export default App;
